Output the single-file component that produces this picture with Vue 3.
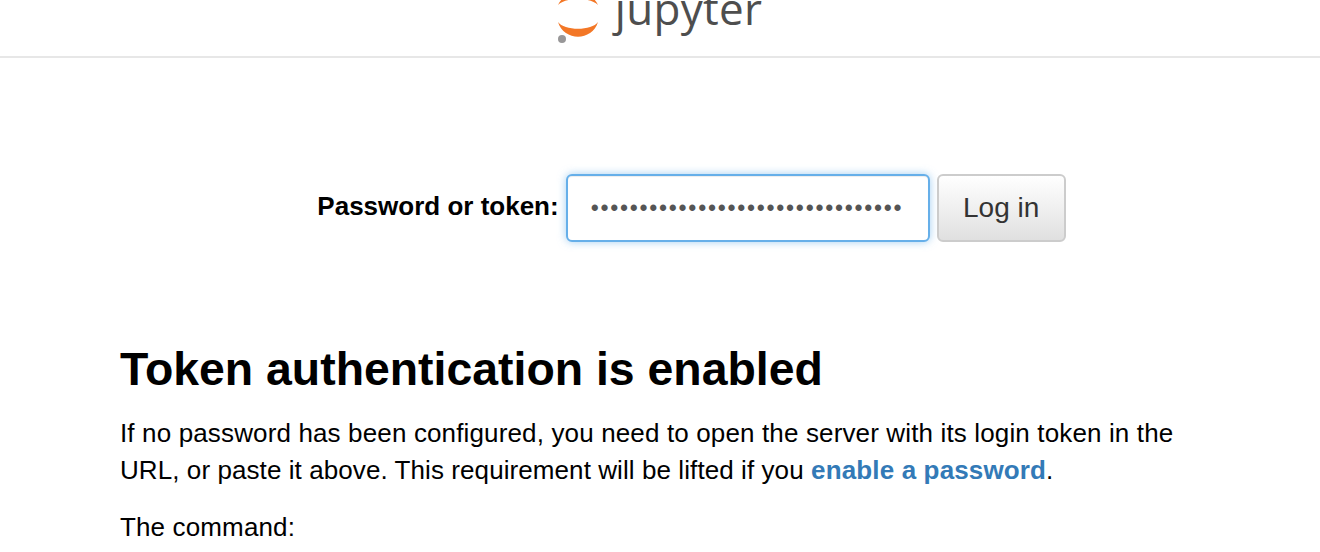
<template>
  <div class="page">
    <header class="top-bar">
      <div class="logo">
        <svg class="logo-mark" width="44" height="46" viewBox="0 0 44 46">
          <path d="M2 5 C10 -12 34 -12 42 5 C34 -3 10 -3 2 5 Z" fill="#f37726" />
          <path d="M2 22 C8 31 36 31 42 22 C36 41.5 8 41.5 2 22 Z" fill="#f37726" />
          <circle cx="6" cy="39" r="4" fill="#989798" />
        </svg>
        <span class="logo-word">jupyter</span>
      </div>
    </header>

    <form class="login-row" @submit.prevent>
      <label class="login-label" for="token">Password or token:</label>
      <input id="token" v-model="token" class="login-input" type="password" />
      <button class="login-button" type="submit">Log in</button>
    </form>

    <section class="help">
      <h3>Token authentication is enabled</h3>
      <p>
        If no password has been configured, you need to open the server with its login token in the
        <span class="tight">URL, or paste it above. This requirement will be lifted if you</span> <a href="#">enable a password</a>.
      </p>
      <p>The command:</p>
    </section>
  </div>
</template>

<script setup>
import { ref } from 'vue';

const token = ref('x'.repeat(32));
</script>

<style>
html,
body {
  background: #fff;
  overflow: hidden;
}
</style>

<style scoped>
.page {
  height: 552px;
  overflow: hidden;
  font-family: "Liberation Sans", Arial, sans-serif;
  color: #000;
}

.top-bar {
  height: 56px;
  border-bottom: 2px solid #e7e7e7;
  display: flex;
  justify-content: center;
  overflow: hidden;
}

.logo {
  display: flex;
  align-items: flex-start;
  margin-left: -2px;
  height: 56px;
}

.logo-mark {
  flex: none;
}

.logo-word {
  font-family: "Open Sans", sans-serif;
  font-size: 44px;
  line-height: 44px;
  letter-spacing: 0.3px;
  color: #4e4e4e;
  margin: -14px 0 0 15px;
}

.login-row {
  display: flex;
  justify-content: center;
  align-items: center;
  gap: 7px;
  margin-top: 116px;
  margin-left: 63px;
}

.login-label {
  font-size: 26px;
  font-weight: 700;
  margin-bottom: 4px;
}

.login-input {
  width: 364px;
  height: 68px;
  box-sizing: border-box;
  padding: 0 23px;
  border: 2px solid #66afe9;
  border-radius: 6px;
  box-shadow: inset 0 1px 1px rgba(0, 0, 0, 0.075), 0 0 8px rgba(102, 175, 233, 0.6);
  outline: none;
  background: #fff;
  color: #555;
  font-family: "Liberation Sans", Arial, sans-serif;
  font-size: 23px;
  letter-spacing: 1.72px;
}

.login-button {
  width: 129px;
  height: 68px;
  border: 2px solid #ccc;
  border-radius: 6px;
  background: linear-gradient(to bottom, #fff, #e0e0e0);
  color: #333;
  font-family: "Liberation Sans", Arial, sans-serif;
  font-size: 28px;
}

.help {
  padding: 0 120px;
  margin-top: 98px;
}

.help h3 {
  margin: 0 0 17px;
  font-size: 46.4px;
  line-height: 58px;
  font-weight: 700;
}

.help p {
  margin: 0 0 20px;
  font-size: 26px;
  line-height: 37px;
  letter-spacing: 0.14px;
}

.help .tight {
  letter-spacing: 0.08px;
}

.help a {
  color: #337ab7;
  font-weight: 700;
  text-decoration: none;
}
</style>
